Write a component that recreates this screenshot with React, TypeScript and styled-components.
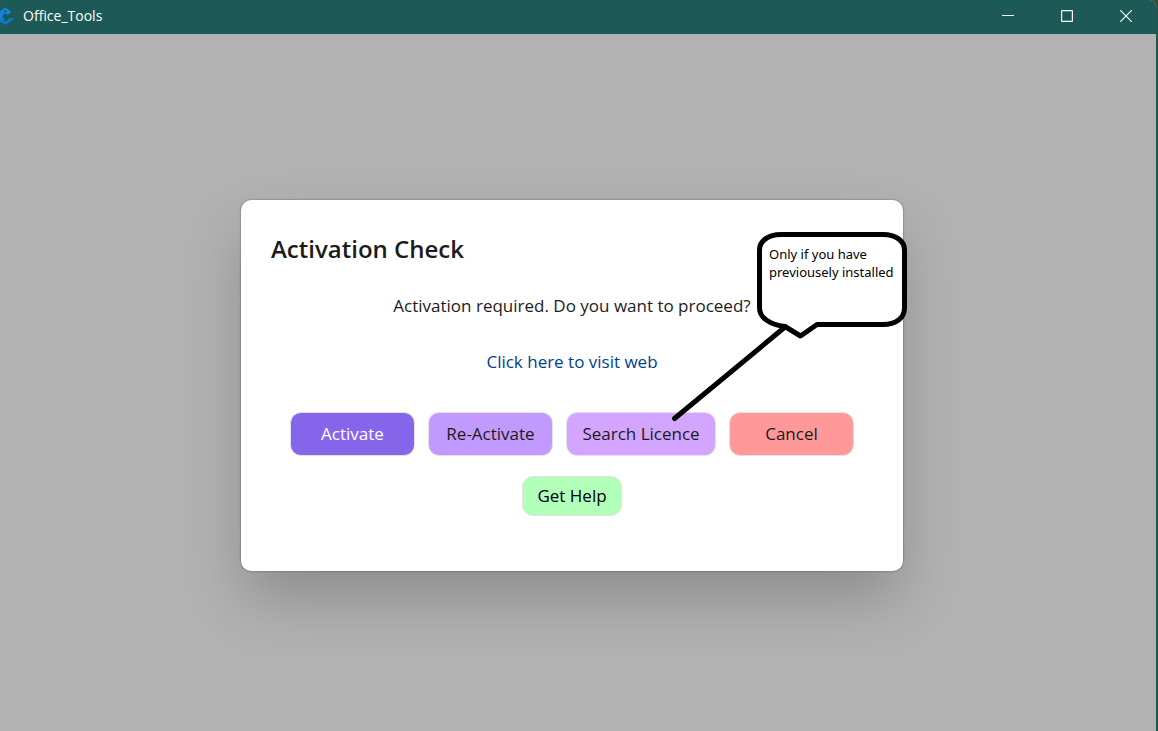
import React from "react";
import styled, { createGlobalStyle } from "styled-components";

const GlobalStyle = createGlobalStyle`
  * { box-sizing: border-box; }
  body {
    margin: 0;
    background: #3d4d2c;
    font-family: "Segoe UI", "Open Sans", "Noto Sans", sans-serif;
  }
`;

const Window = styled.div`
  display: flex;
  flex-direction: column;
  min-height: 100vh;
  margin-right: 1px;
  border-right: 1px solid #1d5a57;
  border-top-right-radius: 8px;
  background: #b2b2b2;
  overflow: hidden;
`;

const TitleBar = styled.header`
  display: flex;
  align-items: center;
  height: 34px;
  padding: 0 1px 3px 0;
  background: #1d5a57;
  color: #fff;
`;

const Logo = styled.svg`
  width: 16px;
  height: 20px;
  flex: none;
`;

const AppName = styled.span`
  flex: 1;
  padding-left: 7px;
  font-size: 14px;
  line-height: 20px;
`;

const WindowButton = styled.button`
  display: flex;
  align-items: center;
  justify-content: center;
  width: 59px;
  height: 30px;
  padding: 0;
  border: 0;
  background: transparent;
  color: #fff;
`;

const Client = styled.main`
  flex: 1;
  display: flex;
  align-items: center;
  justify-content: center;
  padding: 6px 12px 0 0;
`;

const Dialog = styled.section`
  position: relative;
  width: 662px;
  max-width: 100%;
  padding: 32px 30px 55px;
  border-radius: 10px;
  background: #fff;
  color: #1b1b1b;
  text-align: center;
  box-shadow: 0 0 2px rgba(0, 0, 0, 0.5), 0 30px 60px -4px rgba(0, 0, 0, 0.22);
`;

const Title = styled.h1`
  margin: 0;
  font-size: 24px;
  font-weight: 600;
  line-height: 34px;
  text-align: left;
`;

const Message = styled.p`
  margin: 28px 0 0;
  font-size: 17px;
  line-height: 24px;
`;

const WebLink = styled.a`
  display: inline-block;
  margin-top: 32px;
  color: #003e92;
  font-size: 17px;
  line-height: 24px;
  text-decoration: none;
`;

const Actions = styled.div`
  display: flex;
  justify-content: center;
  gap: 13px;
  margin-top: 38px;
`;

const HelpRow = styled.div`
  display: flex;
  justify-content: center;
  margin-top: 20px;
`;

const ActionButton = styled.button<{ $fill: string; $color?: string; $width?: number; $height?: number }>`
  width: ${(p) => p.$width ?? 125}px;
  height: ${(p) => p.$height ?? 44}px;
  padding: 0;
  border: 1px solid #e4e2e6;
  border-radius: 11px;
  background: ${(p) => p.$fill};
  color: ${(p) => p.$color ?? "#1b1b1b"};
  font-family: inherit;
  font-size: 17px;
  line-height: 24px;
`;

const Callout = styled.aside`
  position: absolute;
  top: 30px;
  right: -7px;
  width: 240px;
  height: 194px;
  pointer-events: none;
`;

const CalloutShape = styled.svg`
  display: block;
`;

const CalloutText = styled.p`
  position: absolute;
  top: 15px;
  left: 99px;
  margin: 0;
  color: #000;
  font-family: "Noto Sans", sans-serif;
  font-size: 13px;
  line-height: 18px;
  text-align: left;
  white-space: nowrap;
`;

export default function App() {
  return (
    <>
      <GlobalStyle />
      <Window>
        <TitleBar>
          <Logo viewBox="0 0 16 20" aria-hidden="true">
            <path d="M0 5 5.5 1.5 11.5 6 8 9 5.2 7.2 2.6 9 2.6 12 5 13.6 3 15 0 13z" fill="#1483df" />
            <path d="M3.2 5.4 5.4 4.2 7 5.4 5 6.4z" fill="#1d5a57" />
            <path d="M0 13 5.5 15.6 9.5 12.6 15 12.2 5.5 19 0 15.5z" fill="#0f76d2" />
          </Logo>
          <AppName>Office_Tools</AppName>
          <WindowButton aria-label="Minimize">
            <svg width="12" height="12" viewBox="0 0 12 12">
              <path d="M0 5.5H12" stroke="currentColor" />
            </svg>
          </WindowButton>
          <WindowButton aria-label="Maximize">
            <svg width="12" height="12" viewBox="0 0 12 12">
              <rect x="0.6" y="0.6" width="10.8" height="10.8" rx="0.5" fill="none" stroke="currentColor" strokeWidth="1.2" />
            </svg>
          </WindowButton>
          <WindowButton aria-label="Close">
            <svg width="12" height="12" viewBox="0 0 12 12">
              <path d="M0.3 0.3 11.7 11.7M11.7 0.3 0.3 11.7" stroke="currentColor" strokeWidth="1.1" />
            </svg>
          </WindowButton>
        </TitleBar>
        <Client>
          <Dialog role="dialog" aria-labelledby="dialog-title">
            <Title id="dialog-title">Activation Check</Title>
            <Message>Activation required. Do you want to proceed?</Message>
            <WebLink href="#web">Click here to visit web</WebLink>
            <Actions>
              <ActionButton $fill="#8566ea" $color="#fff">Activate</ActionButton>
              <ActionButton $fill="#c299ff">Re-Activate</ActionButton>
              <ActionButton $fill="#d3a5ff" $width={150}>Search Licence</ActionButton>
              <ActionButton $fill="#ff9999">Cancel</ActionButton>
            </Actions>
            <HelpRow>
              <ActionButton $fill="#b1ffb8" $color="#000" $width={100} $height={40}>Get Help</ActionButton>
            </HelpRow>
            <Callout>
              <CalloutShape width="240" height="194" viewBox="0 0 240 194" aria-hidden="true">
                <path
                  d="M89.5 20C89.5 11 98 4.5 111 4.5H213C226 4.5 234.5 11 234.5 20V78C234.5 88 226 94.5 213 94.5H147L130.5 106 115 96.5C100 94.5 89.5 88 89.5 78Z"
                  fill="#fff"
                  stroke="#000"
                  strokeWidth="5"
                  strokeLinejoin="round"
                />
                <path d="M115 97 4.5 188.5" stroke="#000" strokeWidth="5" strokeLinecap="round" />
              </CalloutShape>
              <CalloutText>
                Only if you have
                <br />
                previousely installed
              </CalloutText>
            </Callout>
          </Dialog>
        </Client>
      </Window>
    </>
  );
}
